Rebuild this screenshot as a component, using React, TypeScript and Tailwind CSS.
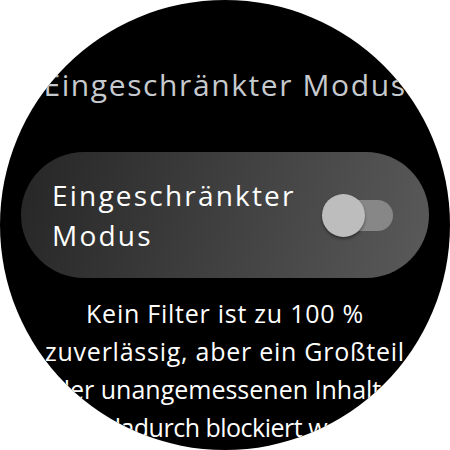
import React from "react";

export default function App() {
  return (
    <div className="w-[450px] h-[450px] bg-white overflow-hidden">
      <div
        className="w-[450px] h-[450px] rounded-full bg-black overflow-hidden flex flex-col items-center"
        style={{ fontFamily: "'Open Sans', 'Noto Sans', sans-serif" }}
      >
        <div className="mt-[67px] h-[36px] whitespace-nowrap text-[30px] leading-[36px] tracking-[1.6px] text-[#c6c9cd]">
          Eingeschränkter Modus
        </div>
        <div className="mt-[49px] w-[408px] h-[126px] shrink-0 rounded-full bg-[linear-gradient(105deg,#262626,#5a5a5a)] flex items-center pl-[31px] pr-[36px]">
          <div className="flex-1 whitespace-nowrap text-[28px] leading-[40px] tracking-[2.2px] font-medium text-white">
            Eingeschränkter
            <br />
            Modus
          </div>
          <div className="relative w-[71px] h-[43px] shrink-0 flex items-center">
            <div className="absolute left-[3px] right-0 h-[31px] rounded-full bg-[#878787]" />
            <div className="relative w-[43px] h-[43px] rounded-full bg-[#bdbdbd] shadow-[0_2px_3px_rgba(0,0,0,0.4)]" />
          </div>
        </div>
        <div className="mt-[16px] w-[440px] shrink-0 flex flex-col items-center text-[25px] leading-[38px] text-white whitespace-nowrap">
          <span className="tracking-[0.75px]">Kein Filter ist zu 100 %</span>
          <span className="tracking-[0.75px]">zuverlässig, aber ein Großteil</span>
          <span className="tracking-[0px]">der unangemessenen Inhalte</span>
          <span className="tracking-[-0.5px]">wird dadurch blockiert werden.</span>
        </div>
      </div>
    </div>
  );
}
